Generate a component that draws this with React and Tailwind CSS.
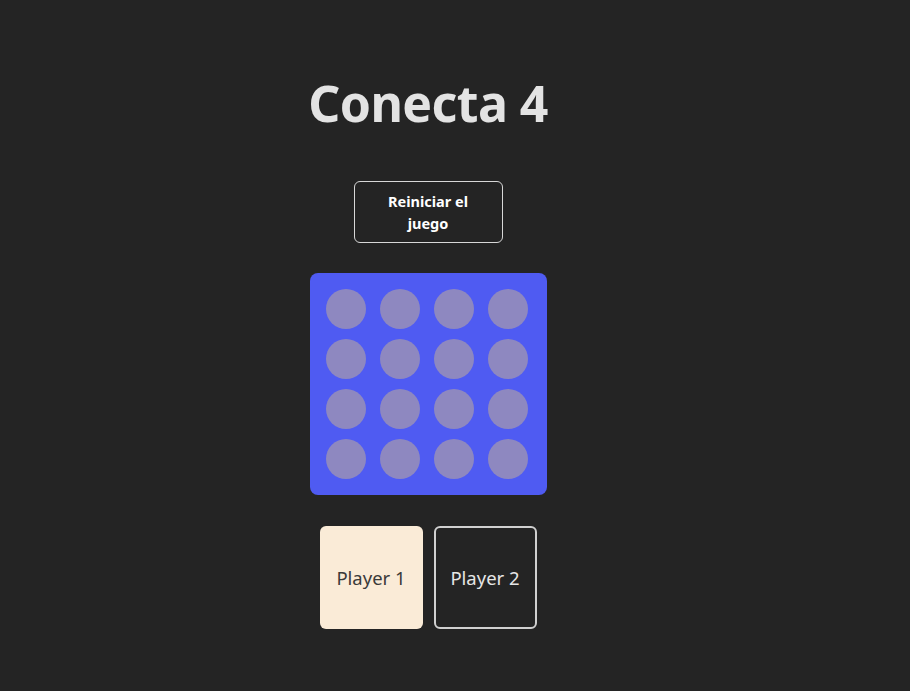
const Slot = () => <div className="h-10 w-10 rounded-full bg-[#8e88c0]" />;

const App = () => {
    const cells = Array.from({ length: 16 });

    return (
        <div className="min-h-[691px] w-full bg-[#242424] font-['Noto_Sans',sans-serif] text-[#e3e3e3]">
            <div className="flex w-[856px] flex-col items-center pt-[76px]">
                <h1 className="text-[50px] font-bold leading-[1.1] tracking-[-0.6px]">Conecta 4</h1>

                <button className="mt-[50px] flex h-[62px] w-[149px] items-center justify-center rounded-md border-[1.5px] border-[#d8d8d8] px-6 text-[14.5px] font-bold leading-[22px] text-white">
                    Reiniciar el juego
                </button>

                <div className="mt-[30px] grid w-[237px] grid-cols-[repeat(4,40px)] gap-x-[14px] gap-y-[10px] rounded-lg bg-[#4f5bf2] py-4 pl-4">
                    {cells.map((_, i) => (
                        <Slot key={i} />
                    ))}
                </div>

                <div className="mt-[31px] flex gap-[11px]">
                    <div className="flex h-[103px] w-[103px] items-center justify-center rounded-md bg-[#faebd7] text-[18.5px] text-[#3a3a3a]">
                        Player 1
                    </div>
                    <div className="flex h-[103px] w-[103px] items-center justify-center rounded-md border-2 border-[#d0d0d0] text-[18.5px] text-[#e6e6e6]">
                        Player 2
                    </div>
                </div>
            </div>
        </div>
    );
};

export default App;
